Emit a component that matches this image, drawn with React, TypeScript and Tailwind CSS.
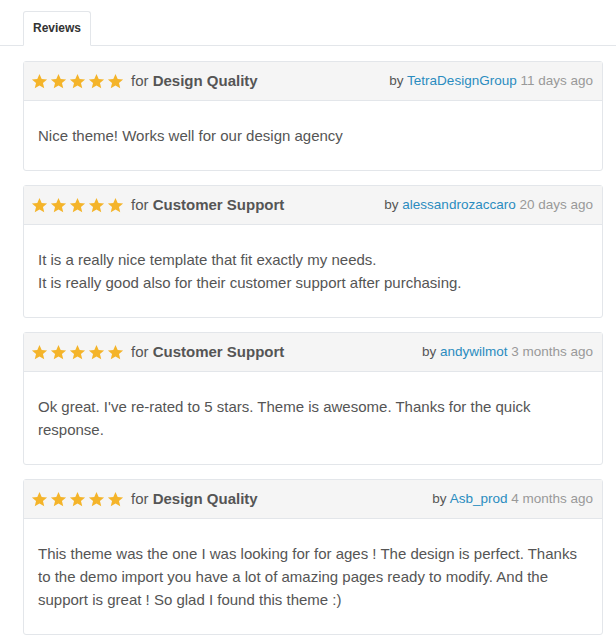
const reviews = [
  {
    topic: "Design Quality",
    author: "TetraDesignGroup",
    when: "11 days ago",
    lines: ["Nice theme! Works well for our design agency"],
  },
  {
    topic: "Customer Support",
    author: "alessandrozaccaro",
    when: "20 days ago",
    lines: [
      "It is a really nice template that fit exactly my needs.",
      "It is really good also for their customer support after purchasing.",
    ],
  },
  {
    topic: "Customer Support",
    author: "andywilmot",
    when: "3 months ago",
    lines: ["Ok great. I've re-rated to 5 stars. Theme is awesome. Thanks for the quick response."],
  },
  {
    topic: "Design Quality",
    author: "Asb_prod",
    when: "4 months ago",
    lines: [
      "This theme was the one I was looking for for ages ! The design is perfect. Thanks to the demo import you have a lot of amazing pages ready to modify. And the support is great ! So glad I found this theme :)",
    ],
  },
]

function Star() {
  return (
    <svg width="17" height="17" viewBox="0 0 24 24" className="shrink-0">
      <path
        d="M12 1.5l3.1 7.1 7.6.6-5.8 5 1.8 7.5L12 17.7l-6.7 4 1.8-7.5-5.8-5 7.6-.6z"
        fill="#f4b42a"
      />
    </svg>
  )
}

export default function App() {
  return (
    <main className="min-h-screen bg-white font-['Liberation_Sans',Arial,sans-serif] text-[#555]">
      <div className="flex border-b border-[#e3e6ea] pl-[23px] pt-[11px]">
        <div className="-mb-px rounded-t-[3px] border border-b-white border-[#e3e6ea] bg-white px-[9px] pb-[9px] pt-[8px] text-[12px] leading-[16px] font-bold text-[#333]">
          Reviews
        </div>
      </div>

      <div className="flex flex-col gap-[14px] pl-[23px] pr-[13px] pt-[15px]">
        {reviews.map((r, i) => (
          <div key={i} className="rounded-[3px] border border-[#e3e6ea]">
            <div className="flex h-[39px] items-center justify-between border-b border-[#e3e6ea] bg-[#f5f5f5] pl-[7px] pr-[9px]">
              <div className="flex items-center">
                <div className="flex gap-[2px]">
                  <Star />
                  <Star />
                  <Star />
                  <Star />
                  <Star />
                </div>
                <span className="ml-[7px] text-[15px]">
                  for <b className="font-bold">{r.topic}</b>
                </span>
              </div>
              <div className="text-[13.5px]">
                by <a className="text-[#2a8cbf]">{r.author}</a>{" "}
                <span className="text-[#999]">{r.when}</span>
              </div>
            </div>
            <div className="px-[14px] py-[23px] text-[15px] leading-[23px]">
              {r.lines.map((l, j) => (
                <p key={j}>{l}</p>
              ))}
            </div>
          </div>
        ))}
      </div>
    </main>
  )
}
